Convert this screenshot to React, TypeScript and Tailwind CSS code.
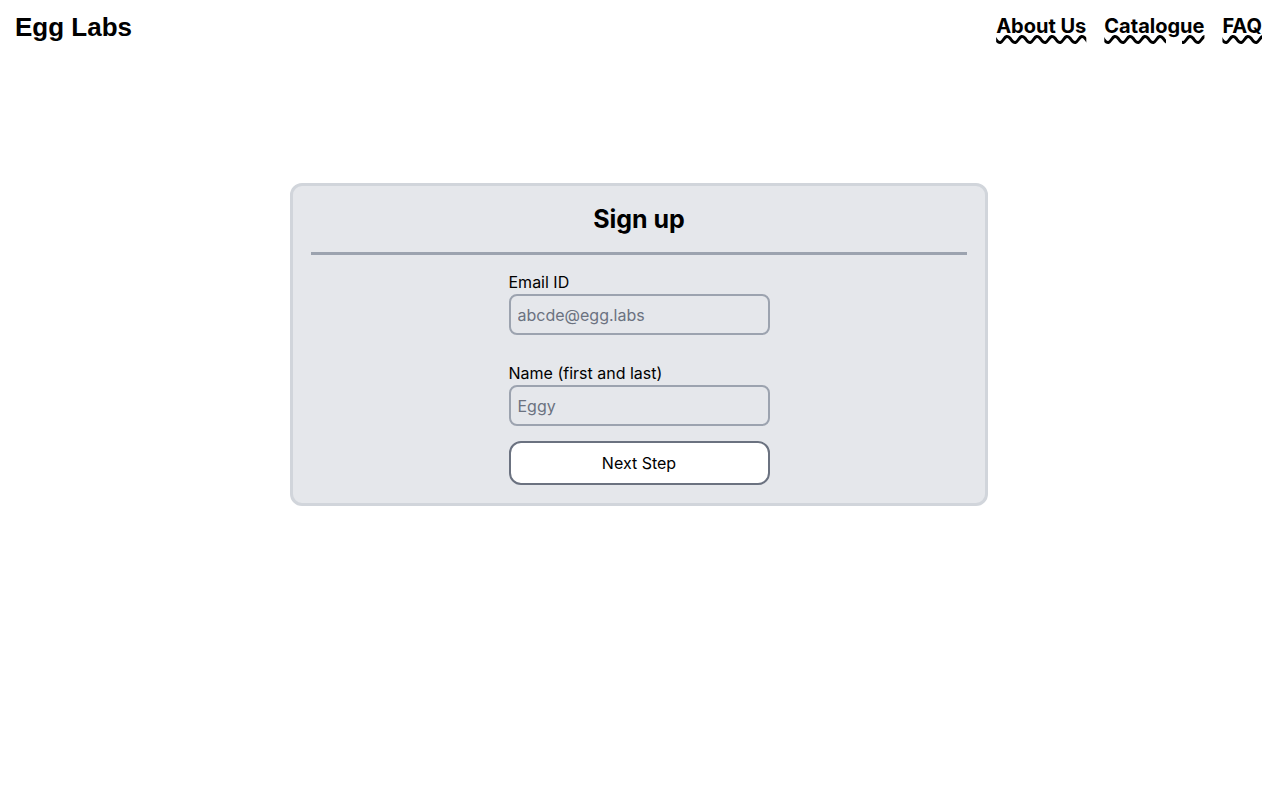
import React from "react";

export default function App() {
  return (
    <div className="min-h-[799px] bg-white text-black" style={{ fontFamily: "Inter, 'Noto Sans', sans-serif" }}>
      <header className="flex items-center justify-between pl-[15px] pr-[18px] h-[54px]">
        <h1 className="text-[26px] font-bold leading-none pb-[1px]" style={{ fontFamily: "'Liberation Sans', Arial, sans-serif" }}>
          Egg Labs
        </h1>
        <nav className="flex items-center gap-[18px] text-[20px] font-bold pb-[2px]">
          <a href="#" className="underline decoration-wavy decoration-[2.5px] underline-offset-[2px]">About Us</a>
          <a href="#" className="underline decoration-wavy decoration-[2.5px] underline-offset-[2px]">Catalogue</a>
          <a href="#" className="underline decoration-wavy decoration-[2.5px] underline-offset-[2px]">FAQ</a>
        </nav>
      </header>
      <main className="flex justify-center pt-[129px] pr-[2px]">
        <div className="w-[698px] bg-[#e5e7eb] border-[3px] border-[#d1d5db] rounded-[12px] px-[18px] pt-[17px] pb-[18px]">
          <h2 className="text-center text-[25px] leading-[32px] font-bold">Sign up</h2>
          <div className="mt-[17px] h-[3px] bg-[#9ca3af]" />
          <form className="mx-auto w-[261px] mt-[15px] flex flex-col" onSubmit={(e) => e.preventDefault()}>
            <label className="text-[16px] leading-[24px]">Email ID</label>
            <input
              type="email"
              placeholder="abcde@egg.labs"
              className="h-[41px] w-full border-2 border-[#9ca3af] rounded-[8px] bg-transparent pl-[7px] text-[16px] placeholder:text-[#6b7280] outline-none"
            />
            <label className="mt-[26px] text-[16px] leading-[24px]">Name (first and last)</label>
            <input
              type="text"
              placeholder="Eggy"
              className="h-[41px] w-full border-2 border-[#9ca3af] rounded-[8px] bg-transparent pl-[7px] text-[16px] placeholder:text-[#6b7280] outline-none"
            />
            <button
              type="submit"
              className="mt-[15px] h-[44px] w-full bg-white border-2 border-[#6b7280] rounded-[12px] text-[16px]"
            >
              Next Step
            </button>
          </form>
        </div>
      </main>
    </div>
  );
}
